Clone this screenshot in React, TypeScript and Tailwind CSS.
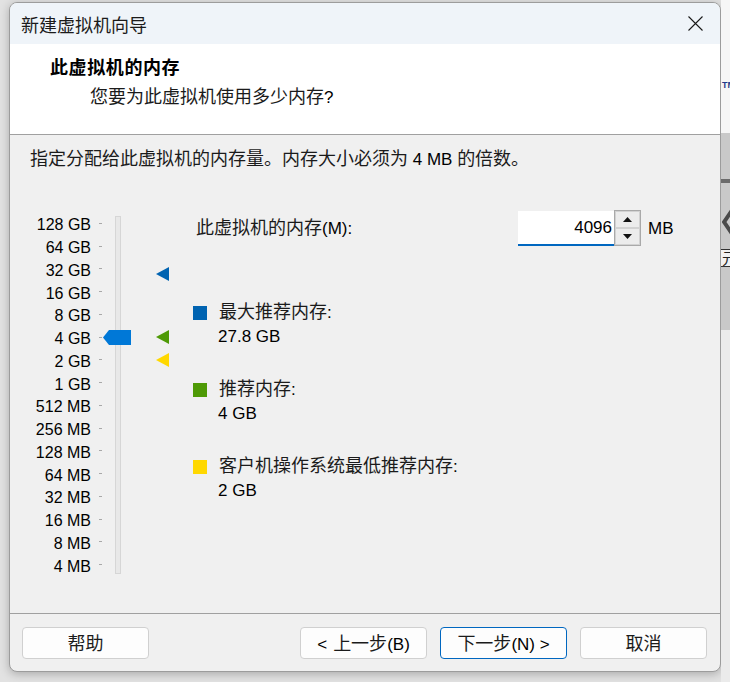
import type { ReactNode } from 'react'

// Text in the wizard mixes a Latin UI face with a larger CJK fallback, so the two are set per span.
// Spans keep leading-none so that mixing the two faces on one line does not grow the line box.
const cjk = "font-['Noto_Sans_CJK_SC',sans-serif] text-[18px] leading-none text-[#1b1b1b]"
const latin = "font-['Liberation_Sans',Arial,sans-serif] text-[16px] leading-none text-black"
const latinLg = "font-['Liberation_Sans',Arial,sans-serif] text-[17px] leading-none text-black"
const line = "h-[24px] font-['Liberation_Sans',Arial,sans-serif] text-[16px] leading-[24px] whitespace-nowrap"

const scale = [
  '128 GB', '64 GB', '32 GB', '16 GB', '8 GB', '4 GB', '2 GB', '1 GB',
  '512 MB', '256 MB', '128 MB', '64 MB', '32 MB', '16 MB', '8 MB', '4 MB',
]

function Marker({ color, className }: { color: string; className: string }) {
  return (
    <svg width="13" height="14" viewBox="0 0 13 14" className={className}>
      <polygon points="0,7 13,0 13,14" fill={color} />
    </svg>
  )
}

function Legend({ color, title, value }: { color: string; title: string; value: string }) {
  return (
    <div className="flex">
      <div className="mt-[5px] size-[14px] shrink-0" style={{ backgroundColor: color }} />
      <div className="ml-[12px] flex flex-col">
        <div className={line}>
          <span className={cjk}>{title}</span>
          <span className={latinLg}>:</span>
        </div>
        <div className={`${line} -ml-px`}>
          <span className={latinLg}>{value}</span>
        </div>
      </div>
    </div>
  )
}

function Button({ children, primary }: { children: ReactNode; primary?: boolean }) {
  return (
    <button
      type="button"
      className={
        primary
          ? 'flex h-[32px] w-[127px] items-center justify-center rounded-[4px] border border-[#0067c0] bg-[#fdfdfd] pt-[4px]'
          : 'flex h-[32px] w-[127px] items-center justify-center rounded-[4px] border border-[#d0d0d0] bg-[#fdfdfd] pt-[4px]'
      }
    >
      <span className={line}>{children}</span>
    </button>
  )
}

export default function App() {
  return (
    <div className="flex h-[682px] w-[730px] overflow-hidden bg-[#e2e2e2]">
      <div className="w-[9px] shrink-0" />

      <div className="mt-[2px] flex h-[670px] w-[712px] shrink-0 flex-col overflow-hidden rounded-[8px] border border-[#9c9c9c] bg-[#f0f0f0] shadow-[0_2px_10px_rgba(0,0,0,0.25)]">
        {/* title bar */}
        <div className="flex h-[41px] shrink-0 items-center justify-between bg-[#eff4f9] pl-[11px] pr-[17px]">
          <span className={cjk}>新建虚拟机向导</span>
          <svg width="15" height="15" viewBox="0 0 15 15">
            <path d="M0.5 0.5 L14.5 14.5 M14.5 0.5 L0.5 14.5" stroke="#1a1a1a" strokeWidth="1.1" />
          </svg>
        </div>

        {/* page header */}
        <div className="h-[90px] shrink-0 bg-white pl-[40px] pt-[13px]">
          <div className={line}>
            <span className={`${cjk} font-bold tracking-[0.6px] text-black`}>此虚拟机的内存</span>
          </div>
          <div className={`${line} mt-[5px] pl-[40px]`}>
            <span className={cjk}>您要为此虚拟机使用多少内存</span>
            <span className={latinLg}>?</span>
          </div>
        </div>
        <div className="h-px shrink-0 bg-[#a0a0a0]" />

        {/* body */}
        <div className="flex-1 pt-[13px]">
          <div className={`${line} pl-[20px]`}>
            <span className={cjk}>指定分配给此虚拟机的内存量。内存大小必须为</span>
            <span className={latinLg}> 4 MB </span>
            <span className={cjk}>的倍数。</span>
          </div>

          <div className="mt-[39px] flex items-start">
            {/* slider scale */}
            <div className="flex flex-col pt-px">
              {scale.map((label) => (
                <div key={label} className="flex h-[22.75px] items-center">
                  <span className={`${latin} w-[81px] pt-[4px] text-right`}>{label}</span>
                  <span className="ml-[8px] h-px w-[3px] bg-[#a8a8a8]" />
                </div>
              ))}
            </div>

            <div className="relative ml-[13px] mt-[5px] h-[358px] w-[6px] border border-[#d6d6d6] bg-[#e8e8e8]">
              <svg width="28" height="15" viewBox="0 0 28 15" className="absolute left-[-13px] top-[113px]">
                <polygon points="0,7.5 6,0 28,0 28,15 6,15" fill="#0078d7" />
              </svg>
            </div>

            <div className="relative ml-[35px] h-[364px] w-[13px]">
              <Marker color="#0063b1" className="absolute left-0 top-[56px]" />
              <Marker color="#4e9a06" className="absolute left-0 top-[119px]" />
              <Marker color="#ffd800" className="absolute left-0 top-[142px]" />
            </div>

            {/* value and recommendations */}
            <div className="ml-[24px] flex flex-col">
              <div className="flex h-[35px] items-center">
                <div className={`${line} w-[325px] pl-[3px]`}>
                  <span className={cjk}>此虚拟机的内存</span>
                  <span className={latinLg}>(M):</span>
                </div>
                <div className="flex h-[35px] w-[96px] items-center justify-end border-b-2 border-[#0067c0] bg-white pr-[2px]">
                  <span className={latinLg}>4096</span>
                </div>
                <div className="-mt-px flex h-[36px] w-[27px] flex-col border border-[#a9a9a9] bg-[#f0f0f0]">
                  <div className="flex flex-1 items-center justify-center border border-[#d2d2d2] bg-[#ececec]">
                    <svg width="9" height="5" viewBox="0 0 9 5">
                      <polygon points="0,5 4.5,0 9,5" fill="#111" />
                    </svg>
                  </div>
                  <div className="flex flex-1 items-center justify-center border border-[#d2d2d2] bg-[#ececec]">
                    <svg width="9" height="5" viewBox="0 0 9 5">
                      <polygon points="0,0 9,0 4.5,5" fill="#111" />
                    </svg>
                  </div>
                </div>
                <span className={`${latinLg} ml-[7px]`}>MB</span>
              </div>

              <div className="mt-[55px] flex flex-col gap-[29px]">
                <Legend color="#0063b1" title="最大推荐内存" value="27.8 GB" />
                <Legend color="#4e9a06" title="推荐内存" value="4 GB" />
                <Legend color="#ffd800" title="客户机操作系统最低推荐内存" value="2 GB" />
              </div>
            </div>
          </div>
        </div>

        <div className="h-px shrink-0 bg-[#a0a0a0]" />

        {/* footer buttons */}
        <div className="flex h-[57px] shrink-0 items-start pl-[12px] pr-[13px] pt-[13px]">
          <Button>
            <span className={cjk}>帮助</span>
          </Button>
          <div className="flex-1" />
          <div className="flex gap-[13px]">
            <Button>
              <span className={latinLg}>&lt;</span>
              <span className={`${cjk} ml-[6px]`}>上一步</span>
              <span className={latinLg}>(B)</span>
            </Button>
            <Button primary>
              <span className={cjk}>下一步</span>
              <span className={latinLg}>(N) &gt;</span>
            </Button>
            <Button>
              <span className={cjk}>取消</span>
            </Button>
          </div>
        </div>
      </div>

      {/* sliver of the application behind the dialog */}
      <div className="flex flex-1 flex-col overflow-hidden">
        <div className="h-[133px] shrink-0 bg-[#f6f6f6] pl-[1px] pt-[70px]">
          <span className="font-['Liberation_Sans',Arial,sans-serif] text-[9px] font-bold leading-none text-[#1f3a8a]">TM</span>
        </div>
        <div className="flex h-[197px] shrink-0 flex-col bg-[#c9c9c9]">
          <div className="mt-[46px] h-[4px] bg-[#6b6b6b]" />
          <svg width="12" height="30" viewBox="0 0 12 30" className="ml-[1px] mt-[24px]">
            <path d="M11 2 L2 15 L11 28" stroke="#4a4a4a" strokeWidth="4" fill="none" />
          </svg>
          <div className="mt-[12px] border-y border-[#333] bg-[#f2f2f2] pl-px font-['Noto_Sans_CJK_SC',sans-serif] text-[15px] leading-[16px] text-[#222]">
            元
          </div>
        </div>
        <div className="flex-1 bg-[#ebebeb]" />
      </div>
    </div>
  )
}
